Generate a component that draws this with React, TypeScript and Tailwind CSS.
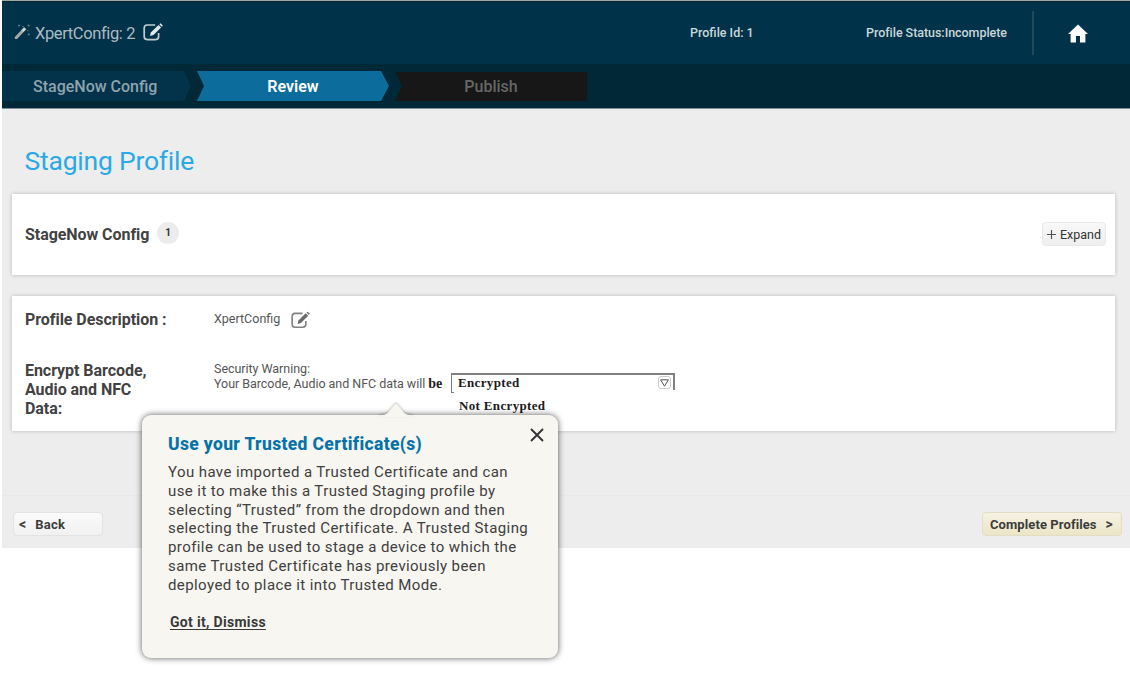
import React from "react";

function EditIcon({ className }: { className: string }) {
  return (
    <svg viewBox="0 0 20 18" className={className} fill="none" stroke="currentColor">
      <path
        d="M12.2 2H4.2Q1.2 2 1.2 5V13.6Q1.2 16.6 4.2 16.6H12.6Q15.6 16.6 15.6 13.6V10"
        strokeWidth="1.7"
        strokeOpacity="0.85"
      />
      <path
        d="M7 13.1L7.8 9.5L15.5 1.9L18.1 4.4L10.5 12.1Z"
        fill="currentColor"
        stroke="none"
      />
      <path d="M16.3 1.2L17.4 0.2L19.9 2.5L18.8 3.7Z" fill="currentColor" stroke="none" />
    </svg>
  );
}

function WandIcon() {
  return (
    <svg viewBox="0 0 16 16" className="h-4 w-4 shrink-0" fill="none">
      <path d="M2.2 14.8L8.6 8" stroke="#a5a9aa" strokeWidth="3" strokeLinecap="round" />
      <path d="M8.5 8.1L11.2 5.2" stroke="#d8d3d0" strokeWidth="3" />
      <path
        d="M4 2.6h2M5 1.6v2M8.4 3.6h1.4M13.6 2.6h2M14.6 1.6v2M13.2 7.8h1.4M13.8 11.4h2M14.8 10.4v2"
        stroke="#5d7885"
        strokeWidth="1.1"
      />
    </svg>
  );
}

function Header() {
  return (
    <header className="flex h-[64px] items-start border-t border-[#a5a7a7] bg-[#003349] shadow-[inset_0_1px_0_#06252f]">
      <div className="flex w-[688px] pl-[12px] pt-[22px]">
        <WandIcon />
        <span className="ml-[5px] mt-px w-[108px] whitespace-nowrap text-[16.5px] font-normal leading-[20px] tracking-[-0.38px] text-[#adbac1]">
          XpertConfig: 2
        </span>
        <EditIcon className="h-[18px] w-[20px] text-[#e3e8ea]" />
      </div>
      <span className="w-[176px] pt-[24px] text-[12.5px] font-medium leading-[16px] text-[#ccd6da]">
        Profile Id: 1
      </span>
      <span className="w-[166px] whitespace-nowrap pt-[24px] text-[12.5px] font-medium leading-[16px] tracking-[-0.04px] text-[#ccd6da]">
        Profile Status:Incomplete
      </span>
      <div className="mt-[10px] h-[44px] w-[2px] bg-[#21495c]" />
      <svg viewBox="0 0 20 19" className="ml-[34px] mt-[23px] h-[19px] w-[20px]" fill="white">
        <path d="M10 0.5L20 10H17.4V18.5H12V12H8V18.5H2.6V10H0Z" />
      </svg>
    </header>
  );
}

function Steps() {
  return (
    <nav className="flex h-[45px] border-b border-[#7f8f96] bg-[#012836] pt-[7px] text-[16px] font-medium leading-[32px]">
      <div className="h-[30px] w-[189px] bg-[#02334a] pl-[31px] text-[#8fa3ad] [clip-path:polygon(0_0,182px_0,100%_50%,182px_100%,0_100%)]">
        StageNow Config
      </div>
      <div className="ml-[6px] h-[30px] w-[192px] bg-[#0c6d9c] text-center font-semibold text-white [clip-path:polygon(0_0,184px_0,100%_50%,184px_100%,0_100%,7px_50%)]">
        Review
      </div>
      <div className="ml-[6px] mt-px h-[29px] w-[192px] bg-[#171717] text-center leading-[30px] text-[#666767] [clip-path:polygon(0_0,100%_0,100%_100%,0_100%,7px_50%)]">
        Publish
      </div>
    </nav>
  );
}

function Callout() {
  return (
    <div className="absolute left-[142px] top-[415px] h-[243px] w-[416px] rounded-[9px] bg-[#f7f6f1] shadow-[0_0_6px_rgba(0,0,0,0.65)]">
      <svg
        viewBox="0 0 32 14"
        className="absolute left-[238px] top-[-12px] h-[14px] w-[32px] drop-shadow-[0_-1px_1px_rgba(0,0,0,0.25)]"
      >
        <path d="M0 14V12.2Q6 12 8 9.5L14.6 1.4Q16 0 17.4 1.4L24 9.5Q26 12 32 12.2V14Z" fill="#f7f6f1" />
      </svg>
      <svg
        viewBox="0 0 14 14"
        className="absolute right-[14px] top-[13px] h-[14px] w-[14px]"
        stroke="#333"
        strokeWidth="1.9"
      >
        <path d="M1 1L13 13M13 1L1 13" />
      </svg>
      <div className="pl-[26px] pt-[19px]">
        <h2 className="text-[17.5px] font-extrabold leading-[20px] tracking-[0.34px] text-[#0673a8]">
          Use your Trusted Certificate(s)
        </h2>
        <p className="mt-[9px] whitespace-nowrap text-[15px] leading-[18.75px] tracking-[0.41px] text-[#404040]">
          You have imported a Trusted Certificate and can
          <br />
          use it to make this a Trusted Staging profile by
          <br />
          selecting “Trusted” from the dropdown and then
          <br />
          selecting the Trusted Certificate. A Trusted Staging
          <br />
          profile can be used to stage a device to which the
          <br />
          same Trusted Certificate has previously been
          <br />
          deployed to place it into Trusted Mode.
        </p>
        <button className="ml-[2px] mt-[19px] block text-[14px] font-bold leading-[18px] tracking-[0.31px] text-[#3a3a3a] underline underline-offset-2 [text-decoration-skip-ink:none]">
          Got it, Dismiss
        </button>
      </div>
    </div>
  );
}

export default function App() {
  return (
    <div className="relative h-[674px] w-[1130px] overflow-hidden bg-white pl-[2px] font-[Roboto,sans-serif]">
      <Header />
      <Steps />
      <main className="h-[439px] bg-[#ededed] pl-[10px] pr-[15px] pt-[34px]">
        <h1 className="h-[51px] pl-[12.5px] text-[26.5px] font-normal leading-[35px] tracking-[-0.22px] text-[#2aa9e4]">
          Staging Profile
        </h1>
        <section className="flex h-[81px] items-start bg-white pl-[13px] shadow-[0_0_4px_rgba(0,0,0,0.22)]">
          <h3 className="mt-[31px] w-[132px] whitespace-nowrap text-[16px] font-bold leading-[20px] tracking-[-0.06px] text-[#424242]">
            StageNow Config
          </h3>
          <span className="mt-[28px] h-[22px] w-[22px] rounded-full bg-[#ececec] text-center text-[10px] font-bold leading-[21px] text-[#333]">
            1
          </span>
          <button className="ml-auto mr-[9px] mt-[28px] flex h-[24px] w-[64px] items-center justify-center gap-[4px] rounded-[4px] border border-[#e9e9e9] bg-gradient-to-b from-[#f8f8f8] to-[#efefef] text-[12.5px] text-[#333]">
            <svg viewBox="0 0 9 9" className="h-[9px] w-[9px]" stroke="#555" strokeWidth="1.2">
              <path d="M4.5 0V9M0 4.5H9" />
            </svg>
            <span className="pt-[2px]">Expand</span>
          </button>
        </section>
        <section className="mt-[21px] h-[135px] bg-white pl-[13px] shadow-[0_0_4px_rgba(0,0,0,0.22)]">
          <div className="flex h-[65px]">
            <h3 className="mt-[14px] w-[189px] text-[16px] font-bold leading-[20px] tracking-[-0.05px] text-[#424242]">
              Profile Description :
            </h3>
            <span className="mt-[15px] w-[77px] text-[12.5px] leading-[16px] text-[#555]">XpertConfig</span>
            <EditIcon className="mt-[15px] h-[18px] w-[19px] text-[#6a6a6a]" />
          </div>
          <div className="flex">
            <h3 className="w-[189px] whitespace-nowrap text-[16px] font-bold leading-[19px] tracking-[-0.05px] text-[#424242]">
              Encrypt Barcode,
              <br />
              Audio and NFC
              <br />
              Data:
            </h3>
            <p className="w-[237px] whitespace-nowrap text-[12.5px] leading-[15px] tracking-[-0.04px] text-[#555]">
              Security Warning:
              <br />
              Your Barcode, Audio and NFC data will{" "}
              <b className="font-['Liberation_Serif',serif] text-[14px] leading-none text-[#222]">be</b>
            </p>
            <div className="mt-[12px] w-[224px] whitespace-nowrap font-['Liberation_Serif',serif] text-[13px] font-bold leading-[17px] tracking-[0.34px] text-[#1c1c1c]">
              <div className="flex">
                <div className="mt-[2px] h-[18px] w-[3px] border-b border-l border-[#777]" />
                <div className="-ml-[3px] flex h-[17px] flex-1 items-center border-r-2 border-t-2 border-[#808080] pl-[7px]">
                  <span>Encrypted</span>
                  <span className="ml-auto mr-[2px] flex h-[13px] w-[13px] items-center justify-center rounded-[3px] border border-[#ccc]">
                    <svg viewBox="0 0 9 8" className="h-[8px] w-[9px] shrink-0" fill="none" stroke="#555">
                      <path d="M0.6 0.8H8.4L4.5 7.2Z" />
                    </svg>
                  </span>
                </div>
              </div>
              <div className="pl-[8px] pt-[4px]">Not Encrypted</div>
            </div>
          </div>
        </section>
        <div className="-ml-[10px] -mr-[15px] mt-[64px] flex h-[52px] items-start justify-between border-t border-[#e9e9e9] pl-[11px] pr-[8px] pt-[16px] text-[13px] font-bold text-[#3d3d3d]">
          <button className="flex h-[24px] w-[90px] items-center gap-[9px] rounded-[4px] border border-[#e3e3e3] bg-gradient-to-b from-[#fafafa] to-[#f1f1f1] pl-[5px]">
            <span className="text-[14px]">&lt;</span>
            <span className="pt-px tracking-[0.3px]">Back</span>
          </button>
          <button className="flex h-[24px] w-[140px] items-center gap-[9px] rounded-[4px] border border-[#e3ddc6] bg-gradient-to-b from-[#f5f2e4] to-[#ece5c6] pl-[7px]">
            <span className="pt-px tracking-[0.09px]">Complete Profiles</span>
            <span className="text-[14px]">&gt;</span>
          </button>
        </div>
      </main>
      <Callout />
    </div>
  );
}
